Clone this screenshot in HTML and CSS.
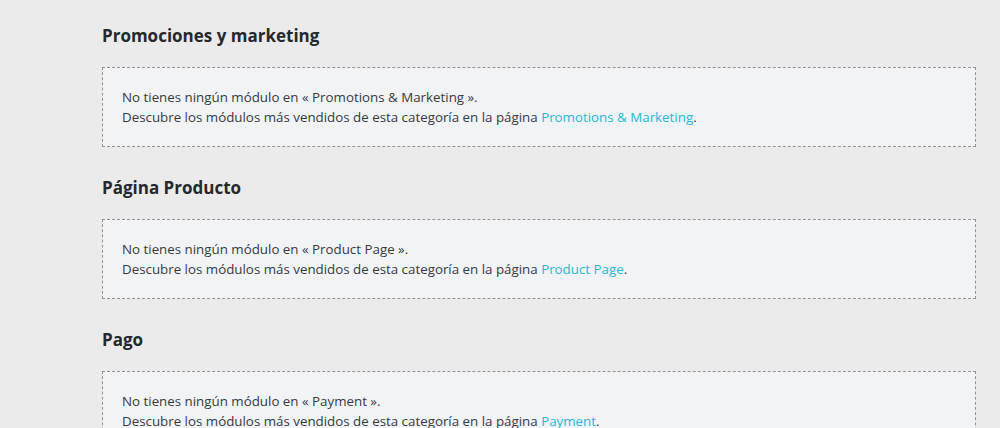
FILE: index.html
```html
<!DOCTYPE html>
<html lang="es">
<head>
<meta charset="utf-8">
<title>Módulos</title>
<link rel="stylesheet" href="styles.css">
</head>
<body>
<main class="page">
  <section class="category">
    <h2 class="category-title">Promociones y marketing</h2>
    <div class="empty-box">
      <p>No tienes ningún módulo en « Promotions &amp; Marketing ».</p>
      <p>Descubre los módulos más vendidos de esta categoría en la página <a href="#">Promotions &amp; Marketing</a>.</p>
    </div>
  </section>
  <section class="category">
    <h2 class="category-title">Página Producto</h2>
    <div class="empty-box">
      <p>No tienes ningún módulo en « Product Page ».</p>
      <p>Descubre los módulos más vendidos de esta categoría en la página <a href="#">Product Page</a>.</p>
    </div>
  </section>
  <section class="category">
    <h2 class="category-title">Pago</h2>
    <div class="empty-box">
      <p>No tienes ningún módulo en « Payment ».</p>
      <p>Descubre los módulos más vendidos de esta categoría en la página <a href="#">Payment</a>.</p>
    </div>
  </section>
</main>
</body>
</html>
```

FILE: styles.css
```css
html, body {
  margin: 0;
  padding: 0;
}
body {
  background: #ebebec;
  font-family: "Open Sans", "Noto Sans", sans-serif;
  color: #363a41;
  height: 428px;
  overflow: hidden;
}
.page {
  padding: 24px 24px 0 102px;
}
.category {
  margin-bottom: 29px;
}
.category-title {
  margin: 0 0 19px;
  font-size: 17px;
  line-height: 24px;
  font-weight: 700;
  color: #25282c;
}
.empty-box {
  border: 1px dashed #929396;
  background: #f2f3f5;
  padding: 19px 19px;
  font-size: 13.33px;
  line-height: 20px;
}
.empty-box p {
  margin: 0;
}
.empty-box a {
  color: #25b9d7;
  text-decoration: none;
}
```
